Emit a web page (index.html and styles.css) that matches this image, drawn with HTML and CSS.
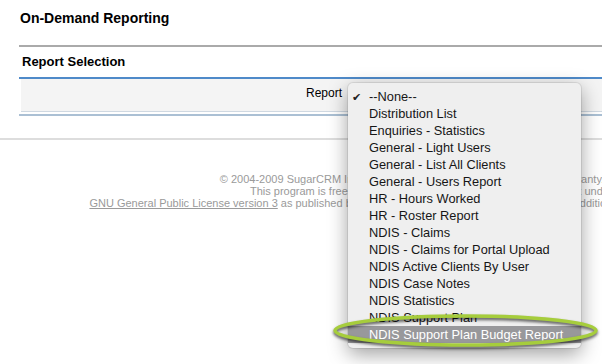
FILE: index.html
```html
<!DOCTYPE html>
<html><head>
  <meta charset="UTF-8">
  <title>On-Demand Reporting</title>
  <link rel="stylesheet" href="styles.css">
</head><body>

<div class="page">
  <h2 class="moduleTitle">On-Demand Reporting</h2>

  <div class="panel">
    <h4 class="panelHead">Report Selection</h4>
    <div class="panelBody">
      <div class="fieldRow">
        <label class="fieldLabel" for="report">Report</label>
        <select id="report" class="fieldSelect">
          <option selected>--None--</option>
        </select>
      </div>
    </div>
  </div>

  <div class="footerLine"></div>
  <div class="footer">
    &copy; 2004-2009 SugarCRM Inc. The Program is provided AS IS, without warranty. Licensed under GPLv3.<br>
    This program is free software; you can redistribute it and/or modify it under the terms of the<br>
    <a href="#">GNU General Public License version 3</a> as published by the Free Software Foundation including the additional permission set forth in the source code header.
  </div>
</div>

<ul class="popMenu">
  <li class="checked">--None--</li>
  <li>Distribution List</li>
  <li>Enquiries - Statistics</li>
  <li>General - Light Users</li>
  <li>General - List All Clients</li>
  <li>General - Users Report</li>
  <li>HR - Hours Worked</li>
  <li>HR - Roster Report</li>
  <li>NDIS - Claims</li>
  <li>NDIS - Claims for Portal Upload</li>
  <li>NDIS Active Clients By User</li>
  <li>NDIS Case Notes</li>
  <li>NDIS Statistics</li>
  <li>NDIS Support Plan</li>
  <li class="hover">NDIS Support Plan Budget Report</li>
</ul>

<svg class="ring" width="272" height="40" viewBox="0 0 272 40">
  <ellipse cx="134.5" cy="17.5" rx="130.5" ry="14.5" fill="none" stroke="#a6cd3c" stroke-width="3.5"/>
</svg>

</body></html>
```
FILE: styles.css
```css
html, body { margin: 0; padding: 0; overflow: hidden; background: white; }
body { font-family: "Liberation Sans", Arial, sans-serif; color: black; }
.page { width: 942px; }

.moduleTitle { margin: 0 0 0 19px; padding: 10px 1px 18px;
  font-size: 14px; line-height: 17px; font-weight: bold;
  border-bottom: 2px solid #aaaaaa; }

.panelHead { margin: 0 0 0 19px; padding: 7px 3px;
  font-size: 13px; line-height: 16px; font-weight: bold;
  border-bottom: 2px solid #4f8ac9; }
.panelBody { margin-left: 19px; padding-bottom: 2px;
  border-bottom: 2px solid #abc0d4; }
.fieldRow { display: flex; margin-left: 2px; height: 25px; padding-top: 7px;
  background: #f4f4f4; border-bottom: 1px solid #cfd8e1; }
.fieldLabel { width: 321px; text-align: right; font-size: 12px; line-height: 14px; }
.fieldSelect { margin-left: 8px; width: 200px; height: 18px; font-size: 12px; }

.footerLine { margin-top: 22px; border-top: 2px solid #dddddd; }
.footer { margin-top: 33px; text-align: center;
  font-size: 11px; line-height: 12px; color: #9a9a9a; }
.footer a { color: #9a9a9a; }

.popMenu { position: absolute; left: 348px; top: 83px; width: 233px;
  margin: 0; padding: 5px 0; list-style: none;
  background: #efefef; border-radius: 5px;
  box-shadow: 0 0 0 1px rgba(0,0,0,0.08), 0 6px 20px rgba(0,0,0,0.38);
  font-size: 12.8px; color: #161616; }
.popMenu li { position: relative; height: 17px; line-height: 17px; padding-left: 21px; }
.popMenu li.checked::before { content: "\2714"; position: absolute; left: 4px; top: 1px;
  font-family: "DejaVu Sans", sans-serif; font-size: 11px; color: #222; }
.popMenu li.hover { background: #98989b; color: white; }

.ring { position: absolute; left: 331px; top: 313px;
  filter: drop-shadow(0 2.5px 1.5px rgba(0,0,0,0.65)); }
```
